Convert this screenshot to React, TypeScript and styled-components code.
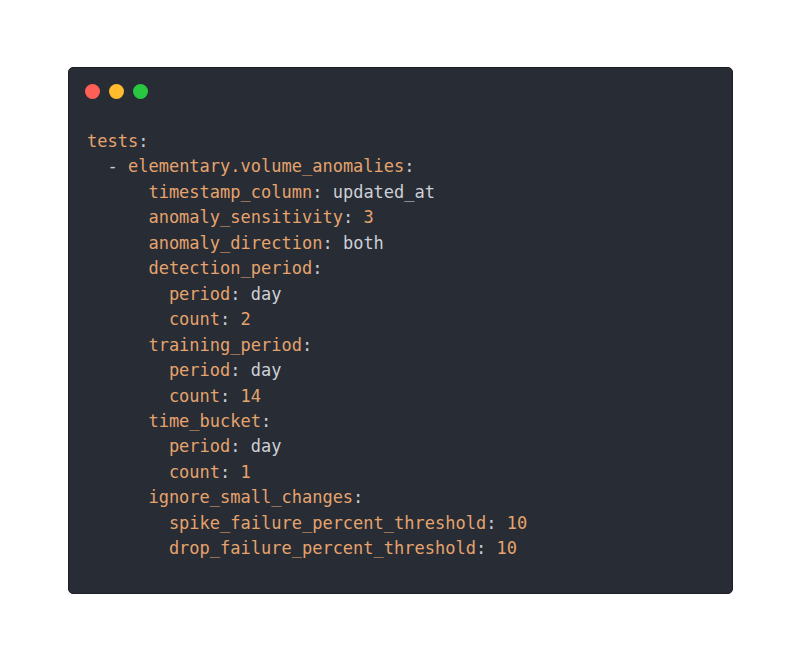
import React from "react";
import styled, { createGlobalStyle } from "styled-components";

const Global = createGlobalStyle`
  html, body { margin: 0; padding: 0; background: #ffffff; }
  body { font-family: "DejaVu Sans Mono", monospace; }
`;

const Page = styled.div`
  width: 800px;
  height: 662px;
  box-sizing: border-box;
  padding: 67px 0 0 68px;
`;

const Window = styled.div`
  width: 665px;
  height: 527px;
  box-sizing: border-box;
  background: #282c34;
  border: 1px solid #1c1f25;
  border-radius: 5px;
  padding: 16px 18px 0 18px;
  display: flex;
  flex-direction: column;
`;

const Dots = styled.div`
  display: flex;
  gap: 9px;
  margin-left: -2px;
`;

const Dot = styled.span<{ $c: string }>`
  width: 15px;
  height: 15px;
  border-radius: 50%;
  background: ${(p) => p.$c};
`;

const Code = styled.pre`
  margin: 30px 0 0 0;
  font-family: "DejaVu Sans Mono", monospace;
  font-size: 17px;
  line-height: 25.45px;
  color: #c8ccd4;
`;

const Line = styled.div<{ $indent: number }>`
  padding-left: ${(p) => p.$indent}ch;
  white-space: pre;
`;

const Key = styled.span`
  color: #e5a36d;
`;

const Punct = styled.span`
  color: #c8ccd4;
`;

const Value = styled.span<{ $num?: boolean }>`
  color: ${(p) => (p.$num ? "#e5a36d" : "#cdd0d6")};
`;

type L = { i: number; k: string; v?: string; dash?: boolean };

const lines: L[] = [
  { i: 0, k: "tests" },
  { i: 2, k: "elementary.volume_anomalies", dash: true },
  { i: 6, k: "timestamp_column", v: "updated_at" },
  { i: 6, k: "anomaly_sensitivity", v: "3" },
  { i: 6, k: "anomaly_direction", v: "both" },
  { i: 6, k: "detection_period" },
  { i: 8, k: "period", v: "day" },
  { i: 8, k: "count", v: "2" },
  { i: 6, k: "training_period" },
  { i: 8, k: "period", v: "day" },
  { i: 8, k: "count", v: "14" },
  { i: 6, k: "time_bucket" },
  { i: 8, k: "period", v: "day" },
  { i: 8, k: "count", v: "1" },
  { i: 6, k: "ignore_small_changes" },
  { i: 8, k: "spike_failure_percent_threshold", v: "10" },
  { i: 8, k: "drop_failure_percent_threshold", v: "10" },
];

export default function App() {
  return (
    <>
      <Global />
      <Page>
        <Window>
          <Dots>
            <Dot $c="#ff5f57" />
            <Dot $c="#febc2e" />
            <Dot $c="#28c840" />
          </Dots>
          <Code>
            {lines.map((l, idx) => (
              <Line key={idx} $indent={l.i}>
                {l.dash && <Punct>- </Punct>}
                <Key>{l.k}</Key>
                <Punct>:</Punct>
                {l.v !== undefined && (
                  <>
                    {" "}
                    <Value $num={/^\d+$/.test(l.v)}>{l.v}</Value>
                  </>
                )}
              </Line>
            ))}
          </Code>
        </Window>
      </Page>
    </>
  );
}
